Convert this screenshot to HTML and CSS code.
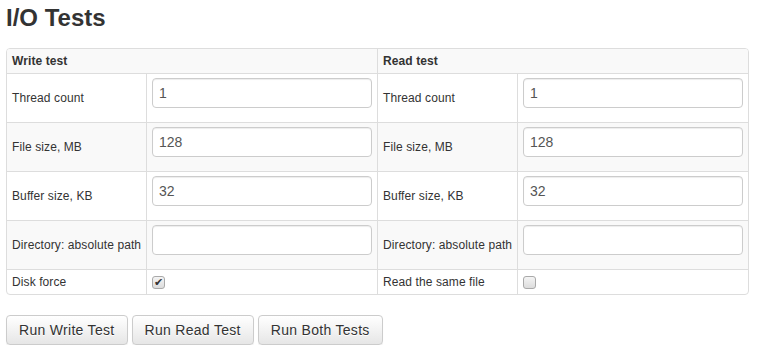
FILE: index.html
```html
<!DOCTYPE html>
<html lang="en">
<head>
  <meta charset="UTF-8" />
  <title>I/O Tests</title>
  <link rel="stylesheet" href="styles.css">
</head>
<body>
  <h1>I/O Tests</h1>

  <div class="panel">
    <table class="io-table">
      <colgroup>
        <col class="col-label">
        <col class="col-input">
        <col class="col-label">
        <col class="col-input">
      </colgroup>
      <tr>
        <th colspan="2">Write test</th>
        <th colspan="2">Read test</th>
      </tr>
      <tr>
        <td>Thread count</td>
        <td><input type="text" value="1"></td>
        <td>Thread count</td>
        <td><input type="text" value="1"></td>
      </tr>
      <tr>
        <td>File size, MB</td>
        <td><input type="text" value="128"></td>
        <td>File size, MB</td>
        <td><input type="text" value="128"></td>
      </tr>
      <tr>
        <td>Buffer size, KB</td>
        <td><input type="text" value="32"></td>
        <td>Buffer size, KB</td>
        <td><input type="text" value="32"></td>
      </tr>
      <tr>
        <td>Directory: absolute path</td>
        <td><input type="text" value=""></td>
        <td>Directory: absolute path</td>
        <td><input type="text" value=""></td>
      </tr>
      <tr class="check-row">
        <td>Disk force</td>
        <td><input type="checkbox" checked></td>
        <td>Read the same file</td>
        <td><input type="checkbox"></td>
      </tr>
    </table>
  </div>

  <div class="actions">
    <button>Run Write Test</button>
    <button>Run Read Test</button>
    <button>Run Both Tests</button>
  </div>
</body>
</html>
```

FILE: styles.css
```css
body {
  font-family: "Liberation Sans", Arial, sans-serif;
  margin: 0;
  padding: 0 6px;
  background: #fff;
  color: #333;
}

h1 {
  font-size: 24px;
  line-height: 26px;
  font-weight: bold;
  margin: 5px 0 17px 0;
}

.panel {
  width: 741px;
  border: 1px solid #ddd;
  border-radius: 4px;
  overflow: hidden;
}

.io-table {
  width: 741px;
  table-layout: fixed;
  border-collapse: separate;
  border-spacing: 0;
  font-size: 12px;
  letter-spacing: 0.1px;
}

.col-label {
  width: 140px;
}

.col-input {
  width: 231px;
}

.io-table col:first-child {
  width: 139px;
}

.io-table th,
.io-table td {
  text-align: left;
  vertical-align: middle;
  white-space: nowrap;
  line-height: 14px;
  padding: 4px 5px;
  border-top: 1px solid #ddd;
  border-left: 1px solid #ddd;
}

.io-table th {
  padding: 5px 5px;
}

.io-table tr:first-child th {
  border-top: none;
}

.io-table th:first-child,
.io-table td:first-child {
  border-left: none;
}

.io-table tr:nth-child(odd) {
  background: #f9f9f9;
}

.io-table input[type="text"] {
  display: block;
  box-sizing: border-box;
  width: 220px;
  height: 30px;
  margin: 0 0 10px 0;
  padding: 4px 6px;
  font-family: inherit;
  font-size: 14px;
  color: #555;
  background: #fff;
  border: 1px solid #ccc;
  border-radius: 4px;
  box-shadow: inset 0 1px 1px rgba(0,0,0,0.075);
}

.check-row td {
  padding: 5px 5px;
}

.io-table input[type="checkbox"] {
  appearance: none;
  -webkit-appearance: none;
  display: block;
  position: relative;
  width: 13px;
  height: 13px;
  margin: 0;
  border: 1px solid #a9a9a9;
  border-radius: 3px;
  background: linear-gradient(to bottom, #f4f4f4, #dcdcdc);
}

.io-table input[type="checkbox"]:checked::after {
  content: "\2714";
  position: absolute;
  left: 1px;
  top: -1px;
  font-size: 11px;
  line-height: 13px;
  color: #333;
}

.actions {
  display: flex;
  gap: 4px;
  margin-top: 20px;
}

.actions button {
  height: 30px;
  padding: 0 12px;
  font-family: inherit;
  font-size: 14px;
  letter-spacing: 0.3px;
  color: #333;
  background: linear-gradient(to bottom, #fff 0, #e6e6e6 100%);
  border: 1px solid #ccc;
  border-radius: 4px;
  text-shadow: 0 1px 0 #fff;
  box-shadow: 0 1px 1px rgba(0,0,0,0.075);
  cursor: pointer;
}
```
